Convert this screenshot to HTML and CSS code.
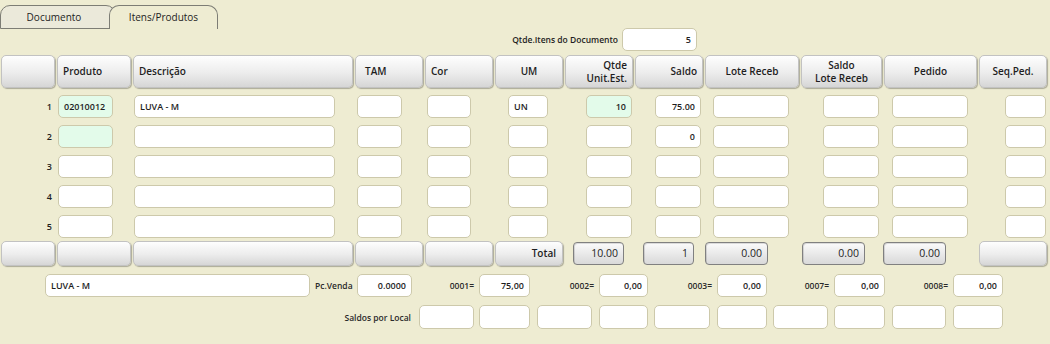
FILE: index.html
```html
<!DOCTYPE html>
<html>
<head>
    <title>Itens/Produtos</title>
    <meta name="viewport" content="width=device-width, initial-scale=1">
    <link rel="stylesheet" href="styles.css">
</head>
<body>
    <div class="tabs">
        <div class="tab">Documento</div>
        <div class="tab active">Itens/Produtos</div>
    </div>

    <div class="doc-qty">
        <span class="label">Qtde.Itens do Documento</span>
        <div class="field num qty-box">5</div>
    </div>

    <!-- Header -->
    <div class="grid head">
        <div class="hcell"></div>
        <div class="hcell">Produto</div>
        <div class="hcell">Descrição</div>
        <div class="hcell pad-tam">TAM</div>
        <div class="hcell">Cor</div>
        <div class="hcell center">UM</div>
        <div class="hcell right">Qtde<br>Unit.Est.</div>
        <div class="hcell right">Saldo</div>
        <div class="hcell center">Lote Receb</div>
        <div class="hcell center">Saldo<br>Lote Receb</div>
        <div class="hcell center">Pedido</div>
        <div class="hcell center">Seq.Ped.</div>
    </div>

    <!-- Rows -->
    <div class="grid row">
        <div class="rownum">1</div>
        <div class="field f-prod mint">02010012</div>
        <div class="field f-desc">LUVA - M</div>
        <div class="field f-tam"></div>
        <div class="field f-cor"></div>
        <div class="field f-um">UN</div>
        <div class="field f-qtde num mint">10</div>
        <div class="field f-saldo num">75.00</div>
        <div class="field f-lote"></div>
        <div class="field f-slote"></div>
        <div class="field f-ped"></div>
        <div class="field f-seq"></div>
    </div>
    <div class="grid row">
        <div class="rownum">2</div>
        <div class="field f-prod mint"></div>
        <div class="field f-desc"></div>
        <div class="field f-tam"></div>
        <div class="field f-cor"></div>
        <div class="field f-um"></div>
        <div class="field f-qtde num"></div>
        <div class="field f-saldo num">0</div>
        <div class="field f-lote"></div>
        <div class="field f-slote"></div>
        <div class="field f-ped"></div>
        <div class="field f-seq"></div>
    </div>
    <div class="grid row">
        <div class="rownum">3</div>
        <div class="field f-prod"></div>
        <div class="field f-desc"></div>
        <div class="field f-tam"></div>
        <div class="field f-cor"></div>
        <div class="field f-um"></div>
        <div class="field f-qtde"></div>
        <div class="field f-saldo"></div>
        <div class="field f-lote"></div>
        <div class="field f-slote"></div>
        <div class="field f-ped"></div>
        <div class="field f-seq"></div>
    </div>
    <div class="grid row">
        <div class="rownum">4</div>
        <div class="field f-prod"></div>
        <div class="field f-desc"></div>
        <div class="field f-tam"></div>
        <div class="field f-cor"></div>
        <div class="field f-um"></div>
        <div class="field f-qtde"></div>
        <div class="field f-saldo"></div>
        <div class="field f-lote"></div>
        <div class="field f-slote"></div>
        <div class="field f-ped"></div>
        <div class="field f-seq"></div>
    </div>
    <div class="grid row">
        <div class="rownum">5</div>
        <div class="field f-prod"></div>
        <div class="field f-desc"></div>
        <div class="field f-tam"></div>
        <div class="field f-cor"></div>
        <div class="field f-um"></div>
        <div class="field f-qtde"></div>
        <div class="field f-saldo"></div>
        <div class="field f-lote"></div>
        <div class="field f-slote"></div>
        <div class="field f-ped"></div>
        <div class="field f-seq"></div>
    </div>

    <!-- Totals -->
    <div class="grid total">
        <div class="tcell"></div>
        <div class="tcell"></div>
        <div class="tcell"></div>
        <div class="tcell"></div>
        <div class="tcell"></div>
        <div class="tcell right">Total</div>
        <div class="tbox t-qtde">10.00</div>
        <div class="tbox t-saldo">1</div>
        <div class="tbox t-lote">0.00</div>
        <div class="tbox t-slote">0.00</div>
        <div class="tbox t-ped">0.00</div>
        <div class="tcell"></div>
    </div>

    <!-- Bottom -->
    <div class="bottom">
        <div class="field b-desc">LUVA - M</div>
        <div class="blabel left">Pc.Venda</div>
        <div class="field num b-w55">0.0000</div>
        <div class="blabel">0001=</div>
        <div class="field num b-w51">75,00</div>
        <div class="blabel">0002=</div>
        <div class="field num b-w49">0,00</div>
        <div class="blabel">0003=</div>
        <div class="field num b-w50">0,00</div>
        <div class="blabel">0007=</div>
        <div class="field num b-w51">0,00</div>
        <div class="blabel">0008=</div>
        <div class="field num b-w50">0,00</div>

        <div class="blabel spl">Saldos por Local</div>
        <div class="field b-w55"></div>
        <div class="field b-w51"></div>
        <div class="field b-w55"></div>
        <div class="field b-w49"></div>
        <div class="field b-w56"></div>
        <div class="field b-w50"></div>
        <div class="field b-w55"></div>
        <div class="field b-w51"></div>
        <div class="field b-w54"></div>
        <div class="field b-w50"></div>
    </div>
</body>
</html>
```

FILE: styles.css
```css
body {
    font-family: "Open Sans", "Noto Sans", sans-serif;
    background-color: #eeecd2;
    color: #1e1e1e;
    margin: 0;
    padding: 5px 0 0 0;
}

/* Tabs */
.tabs {
    display: flex;
    height: 23px;
}

.tab {
    font-size: 10px;
    line-height: 23px;
    text-align: center;
    border: 1px solid #7d7d75;
    border-radius: 10px 10px 0 0;
    background-color: #ebe9da;
    box-sizing: border-box;
    height: 24px;
}

.tab:first-child {
    width: 116px;
    padding-right: 8px;
}

.tab.active {
    width: 109px;
    margin-left: -7px;
    background-color: #eeecd2;
    border-bottom: none;
    position: relative;
}

/* Qtde itens */
.doc-qty {
    display: flex;
    align-items: center;
    justify-content: flex-end;
    width: 697px;
    gap: 4px;
    margin-top: 0;
}

.label {
    font-size: 8.5px;
    font-weight: 600;
}

.qty-box {
    width: 75px;
    height: 25px;
    line-height: 23px;
}

/* Inputs */
.field {
    box-sizing: border-box;
    height: 23px;
    line-height: 21px;
    background-color: #fff;
    border: 1px solid #cdc9ab;
    border-radius: 5px;
    font-size: 9px;
    font-weight: 600;
    padding: 0 5px;
    white-space: nowrap;
    overflow: hidden;
}

.field.num {
    text-align: right;
}

.field.mint {
    background-color: #e3fbea;
}

/* Grid */
.grid {
    display: grid;
    grid-template-columns: 54px 74px 220px 68px 68px 68px 68px 68px 94px 81px 93px 68px;
    column-gap: 2px;
    padding-left: 1px;
}

.head {
    margin-top: 4px;
}

.hcell {
    box-sizing: border-box;
    height: 33px;
    display: flex;
    align-items: center;
    padding: 0 5px;
    font-size: 10px;
    font-weight: 600;
    line-height: 13px;
    border: 1px solid #c2c2c2;
    border-radius: 5px;
    background: linear-gradient(#fefefe, #ececec 55%, #d6d6d6);
    box-shadow: 1px 1px 1px rgba(0, 0, 0, 0.28);
}

.hcell.center {
    justify-content: center;
    text-align: center;
}

.hcell.right {
    justify-content: flex-end;
    text-align: right;
}

.hcell.pad-tam {
    padding-left: 9px;
}

.row {
    margin-top: 7px;
}

.head + .row {
    margin-top: 7px;
}

.rownum {
    text-align: right;
    padding-right: 3px;
    font-size: 9px;
    font-weight: 600;
    line-height: 23px;
}

.f-prod { margin-left: 1px; width: 55px; }
.f-desc { margin-left: 1px; width: 201px; }
.f-tam { margin-left: 2px; width: 45px; }
.f-cor { margin-left: 2px; width: 44px; }
.f-um { margin-left: 13px; width: 40px; }
.f-qtde { justify-self: end; width: 46px; margin-right: 1px; }
.f-saldo { margin-left: 20px; width: 46px; }
.f-lote { margin-left: 8px; width: 76px; }
.f-slote { margin-left: 22px; width: 56px; }
.f-ped { margin-left: 8px; width: 76px; }
.f-seq { margin-left: 26px; width: 41px; }

/* Totals */
.total {
    margin-top: 3px;
    height: 25px;
}

.tcell {
    box-sizing: border-box;
    height: 25px;
    padding: 0 6px;
    font-size: 10px;
    font-weight: 600;
    line-height: 23px;
    border: 1px solid #c2c2c2;
    border-radius: 5px;
    background: linear-gradient(#fefefe, #ececec 55%, #d6d6d6);
    box-shadow: 1px 1px 1px rgba(0, 0, 0, 0.28);
}

.tcell.right {
    text-align: right;
}

.tbox {
    box-sizing: border-box;
    align-self: center;
    height: 23px;
    line-height: 21px;
    padding: 0 5px;
    text-align: right;
    font-size: 10.5px;
    border: 1px solid #808080;
    border-radius: 4px;
    background: linear-gradient(#fbfbfb, #e8e8e8 55%, #d9d9d9);
    box-shadow: inset 1px 1px 0 rgba(0, 0, 0, 0.12);
}

.t-qtde { margin-left: 8px; width: 51px; }
.t-saldo { margin-left: 8px; width: 51px; }
.t-lote { width: 63px; }
.t-slote { margin-left: 1px; width: 63px; }
.t-ped { margin-left: -1px; width: 63px; }

/* Bottom area */
.bottom {
    display: grid;
    grid-template-columns: 267px 45px 62px 60px 58px 62px 55px 63px 56px 61px 58px 61px 50px;
    grid-template-rows: 23px 24px;
    row-gap: 8px;
    margin-top: 8px;
    padding-left: 45px;
}

.blabel {
    font-size: 8.5px;
    font-weight: 600;
    text-align: right;
    padding-right: 5px;
    align-self: center;
    color: #2a2a2a;
}

.blabel.left {
    text-align: left;
    padding-left: 3px;
    padding-right: 0;
}

.blabel.spl {
    grid-column: 1 / 4;
    padding-right: 8px;
}

.bottom .field {
    height: 100%;
    line-height: normal;
    display: flex;
    align-items: center;
}

.bottom .field.num {
    justify-content: flex-end;
}

.b-desc { width: 265px; }
.b-w49 { width: 49px; }
.b-w50 { width: 50px; }
.b-w51 { width: 51px; }
.b-w54 { width: 54px; }
.b-w55 { width: 55px; }
.b-w56 { width: 56px; }
```
